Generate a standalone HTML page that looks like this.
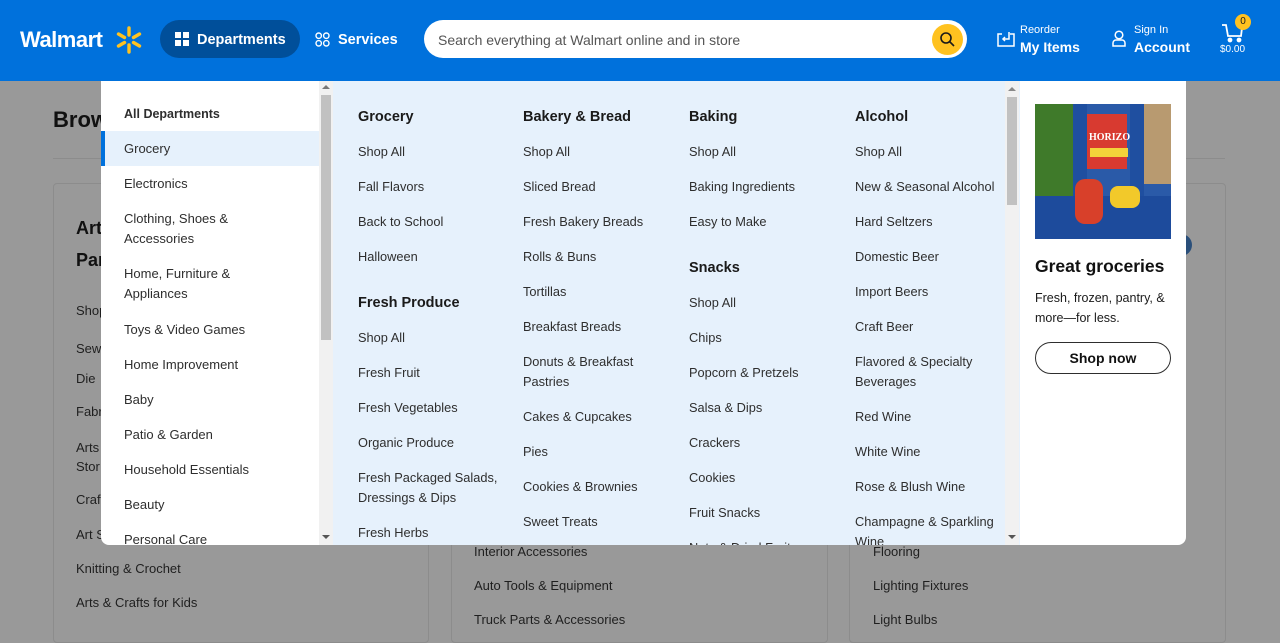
<!DOCTYPE html>
<html><head><meta charset="utf-8"><style>
*{margin:0;padding:0;box-sizing:border-box}
body{width:1280px;height:622px;overflow:hidden;background:#999;font-family:"Liberation Sans",sans-serif;position:relative;color:#2e2e2e}
.a{position:absolute;white-space:nowrap}
.hdr{position:absolute;left:0;top:0;width:1280px;height:81px;background:#0071dc;color:#fff}
.bg{color:#1f1f1f;font-size:13px}
.card{position:absolute;top:183px;height:460px;border:1px solid #8c8c8c;border-radius:4px}
.dd{position:absolute;left:101px;top:81px;width:1085px;height:464px;background:#fff;border-radius:0 0 8px 8px;overflow:hidden}
.left{position:absolute;left:0;top:1px;width:218px;height:464px}
.left div{position:absolute;left:23px;font-size:13px;line-height:20px;color:#2e2e2e}
.sb{position:absolute;top:0;width:14px;height:464px;background:#f1f1f1}
.sb .t{position:absolute;left:2px;width:10px;background:#c1c1c1}
.mid{position:absolute;left:232px;top:0;width:687px;height:464px;background:#e6f1fc}
.col{position:absolute;top:26px;width:160px}
.col h4{font-size:14.5px;line-height:20px;font-weight:bold;color:#1a1a1a;margin-bottom:15px}
.col h4.s{margin-top:26px}
.col p{font-size:12.8px;line-height:20px;margin-bottom:15px;color:#2e2e2e;white-space:normal}
</style></head><body>
<div class="a" style="left:53px;top:107px;font-size:22px;font-weight:bold;color:#111">Browse</div>
<div class="a" style="left:53px;top:158px;width:1172px;height:1px;background:#8c8c8c"></div>
<div class="card" style="left:53px;width:376px"></div>
<div class="card" style="left:451px;width:377px"></div>
<div class="card" style="left:849px;width:377px"></div>
<div class="a" style="left:76px;top:212px;font-size:18px;font-weight:bold;line-height:32px;color:#111">Art<br>Par</div>
<div class="a bg" style="left:76px;top:301px;line-height:19px">Shop<br><br>Sewi</div>
<div class="a bg" style="left:76px;top:371px">Die</div>
<div class="a bg" style="left:76px;top:404px">Fabr</div>
<div class="a bg" style="left:76px;top:438px;line-height:19px">Arts<br>Stor</div>
<div class="a bg" style="left:76px;top:492px">Craf</div>
<div class="a bg" style="left:76px;top:527px">Art S</div>
<div class="a bg" style="left:76px;top:561px">Knitting &amp; Crochet</div>
<div class="a bg" style="left:76px;top:595px">Arts &amp; Crafts for Kids</div>
<div class="a bg" style="left:474px;top:544px">Interior Accessories</div>
<div class="a bg" style="left:474px;top:578px">Auto Tools &amp; Equipment</div>
<div class="a bg" style="left:474px;top:612px">Truck Parts &amp; Accessories</div>
<div class="a bg" style="left:873px;top:544px">Flooring</div>
<div class="a bg" style="left:873px;top:578px">Lighting Fixtures</div>
<div class="a bg" style="left:873px;top:612px">Light Bulbs</div>
<div class="a" style="left:1180px;top:234px;width:12px;height:22px;border-radius:0 11px 11px 0;background:#2a4f7a"></div>

<div class="hdr">
 <div class="a" style="left:20px;top:27px;font-size:22px;font-weight:bold;letter-spacing:-0.5px">Walmart</div>
 <svg class="a" style="left:114px;top:25px" width="30" height="30" viewBox="0 0 30 30" stroke="#ffc220" stroke-width="3.4" stroke-linecap="round">
  <line x1="15" y1="3" x2="15" y2="10"/><line x1="15" y1="20" x2="15" y2="27"/>
  <line x1="4.5" y1="9" x2="10.5" y2="12.5"/><line x1="19.5" y1="17.5" x2="25.5" y2="21"/>
  <line x1="4.5" y1="21" x2="10.5" y2="17.5"/><line x1="19.5" y1="12.5" x2="25.5" y2="9"/>
 </svg>
 <div class="a" style="left:160px;top:20px;width:140px;height:38px;border-radius:19px;background:#004f9a"></div>
 <svg class="a" style="left:175px;top:32px" width="14" height="14" viewBox="0 0 14 14" fill="#fff"><rect x="0" y="0" width="6" height="6"/><rect x="8" y="0" width="6" height="6"/><rect x="0" y="8" width="6" height="6"/><rect x="8" y="8" width="6" height="6"/></svg>
 <div class="a" style="left:197px;top:32px;font-size:14.5px;font-weight:bold">Departments</div>
 <svg class="a" style="left:315px;top:32px" width="15" height="15" viewBox="0 0 15 15" fill="none" stroke="#fff" stroke-width="1.4"><circle cx="3.7" cy="3.7" r="2.7"/><circle cx="11.3" cy="3.7" r="2.7"/><circle cx="3.7" cy="11.3" r="2.7"/><circle cx="11.3" cy="11.3" r="2.7"/></svg>
 <div class="a" style="left:338px;top:32px;font-size:14.5px;font-weight:bold">Services</div>
 <div class="a" style="left:424px;top:20px;width:543px;height:38px;border-radius:19px;background:#fff"></div>
 <div class="a" style="left:438px;top:32px;font-size:14px;color:#555">Search everything at Walmart online and in store</div>
 <div class="a" style="left:932px;top:24px;width:31px;height:31px;border-radius:50%;background:#ffc220"></div>
 <svg class="a" style="left:939px;top:31px" width="17" height="17" viewBox="0 0 17 17" fill="none" stroke="#1a1a1a" stroke-width="1.6"><circle cx="7" cy="7" r="5"/><line x1="10.5" y1="10.5" x2="15" y2="15"/></svg>
 <svg class="a" style="left:997px;top:30px" width="18" height="17" viewBox="0 0 18 17" fill="none" stroke="#fff" stroke-width="1.5"><path d="M5 4H1v12h16V4h-4"/><path d="M12 2v7H6"/><path d="M8 7l-2 2 2 2"/></svg>
 <div class="a" style="left:1020px;top:24px;font-size:11px">Reorder</div>
 <div class="a" style="left:1020px;top:39px;font-size:14px;font-weight:bold">My Items</div>
 <svg class="a" style="left:1112px;top:30px" width="14" height="17" viewBox="0 0 14 17" fill="none" stroke="#fff" stroke-width="1.5"><circle cx="7" cy="5" r="3.8"/><path d="M1 16v-3a3 3 0 0 1 3-3h6a3 3 0 0 1 3 3v3z"/></svg>
 <div class="a" style="left:1134px;top:24px;font-size:11px">Sign In</div>
 <div class="a" style="left:1134px;top:39px;font-size:14px;font-weight:bold">Account</div>
 <svg class="a" style="left:1221px;top:23px" width="24" height="20" viewBox="0 0 24 20" fill="none" stroke="#fff" stroke-width="1.8"><path d="M1 2h4l2 11h13l1-8"/><circle cx="9" cy="17" r="1.5" fill="#fff"/><circle cx="18" cy="17" r="1.5" fill="#fff"/></svg>
 <div class="a" style="left:1235px;top:14px;width:16px;height:16px;border-radius:50%;background:#ffc220;color:#1a1a1a;font-size:10px;text-align:center;line-height:16px">0</div>
 <div class="a" style="left:1220px;top:44px;font-size:10px">$0.00</div>
</div>

<div class="dd">
 <div class="left">
  <div style="top:22px;font-weight:bold;font-size:12.5px">All Departments</div>
  <div style="top:49px;left:0;width:218px;height:35px;background:#e6f1fc;border-left:4px solid #0071dc"></div>
  <div style="top:57px">Grocery</div>
  <div style="top:92px">Electronics</div>
  <div style="top:127px">Clothing, Shoes &amp;<br>Accessories</div>
  <div style="top:182px">Home, Furniture &amp;<br>Appliances</div>
  <div style="top:238px">Toys &amp; Video Games</div>
  <div style="top:273px">Home Improvement</div>
  <div style="top:308px">Baby</div>
  <div style="top:343px">Patio &amp; Garden</div>
  <div style="top:378px">Household Essentials</div>
  <div style="top:413px">Beauty</div>
  <div style="top:448px">Personal Care</div>
 </div>
 <div class="sb" style="left:218px"><div class="t" style="top:14px;height:245px"></div>
  <div class="a" style="left:3px;top:4px;border:4px solid transparent;border-bottom:4px solid #777;border-top:0"></div>
  <div class="a" style="left:3px;top:454px;border:4px solid transparent;border-top:4px solid #555;border-bottom:0"></div></div>
 <div class="mid">
  <div class="col" style="left:25px">
   <h4>Grocery</h4><p>Shop All</p><p>Fall Flavors</p><p>Back to School</p><p>Halloween</p>
   <h4 class="s">Fresh Produce</h4><p>Shop All</p><p>Fresh Fruit</p><p>Fresh Vegetables</p><p>Organic Produce</p><p>Fresh Packaged Salads, Dressings &amp; Dips</p><p>Fresh Herbs</p>
  </div>
  <div class="col" style="left:190px">
   <h4>Bakery &amp; Bread</h4><p>Shop All</p><p>Sliced Bread</p><p>Fresh Bakery Breads</p><p>Rolls &amp; Buns</p><p>Tortillas</p><p>Breakfast Breads</p><p style="width:125px">Donuts &amp; Breakfast Pastries</p><p>Cakes &amp; Cupcakes</p><p>Pies</p><p>Cookies &amp; Brownies</p><p>Sweet Treats</p>
  </div>
  <div class="col" style="left:356px">
   <h4>Baking</h4><p>Shop All</p><p>Baking Ingredients</p><p>Easy to Make</p>
   <h4 class="s">Snacks</h4><p>Shop All</p><p>Chips</p><p>Popcorn &amp; Pretzels</p><p>Salsa &amp; Dips</p><p>Crackers</p><p>Cookies</p><p>Fruit Snacks</p><p>Nuts &amp; Dried Fruit</p>
  </div>
  <div class="col" style="left:522px">
   <h4>Alcohol</h4><p>Shop All</p><p>New &amp; Seasonal Alcohol</p><p>Hard Seltzers</p><p>Domestic Beer</p><p>Import Beers</p><p>Craft Beer</p><p style="width:130px">Flavored &amp; Specialty Beverages</p><p>Red Wine</p><p>White Wine</p><p>Rose &amp; Blush Wine</p><p style="width:145px">Champagne &amp; Sparkling Wine</p>
  </div>
 </div>
 <div class="sb" style="left:904px;background:#f1f1f1"><div class="t" style="top:16px;height:108px"></div>
  <div class="a" style="left:3px;top:6px;border:4px solid transparent;border-bottom:4px solid #888;border-top:0"></div>
  <div class="a" style="left:3px;top:454px;border:4px solid transparent;border-top:4px solid #555;border-bottom:0"></div></div>
 <div class="a" style="left:934px;top:23px;width:136px;height:135px;overflow:hidden;background:#2a5aa8">
  <div class="a" style="left:0;top:0;width:40px;height:100px;background:#3f7a2a"></div>
  <div class="a" style="left:100px;top:0;width:36px;height:80px;background:#b89a70"></div>
  <div class="a" style="left:52px;top:10px;width:40px;height:55px;background:#d83a30"></div>
  <div class="a" style="left:54px;top:28px;font-size:10px;font-weight:bold;color:#fff;font-family:'Liberation Serif',serif">HORIZO</div>
  <div class="a" style="left:55px;top:44px;width:38px;height:9px;background:#f3d23a"></div>
  <div class="a" style="left:38px;top:0;width:14px;height:100px;background:#1f4fa0"></div>
  <div class="a" style="left:95px;top:0;width:14px;height:100px;background:#1f4fa0"></div>
  <div class="a" style="left:0;top:92px;width:136px;height:43px;background:#1d4b9c"></div>
  <div class="a" style="left:40px;top:75px;width:28px;height:45px;border-radius:10px;background:#d8402a"></div>
  <div class="a" style="left:75px;top:82px;width:30px;height:22px;border-radius:8px;background:#f2c92a"></div>
 </div>
 <div class="a" style="left:934px;top:175px;font-size:17.5px;font-weight:bold;color:#111">Great groceries</div>
 <div class="a" style="left:934px;top:207px;font-size:12.5px;line-height:20px;color:#1a1a1a">Fresh, frozen, pantry, &amp;<br>more—for less.</div>
 <div class="a" style="left:934px;top:261px;width:136px;height:32px;border:1px solid #2e2e2e;border-radius:16px;text-align:center;line-height:30px;font-size:14px;font-weight:bold;color:#111">Shop now</div>
</div>
</body></html>
